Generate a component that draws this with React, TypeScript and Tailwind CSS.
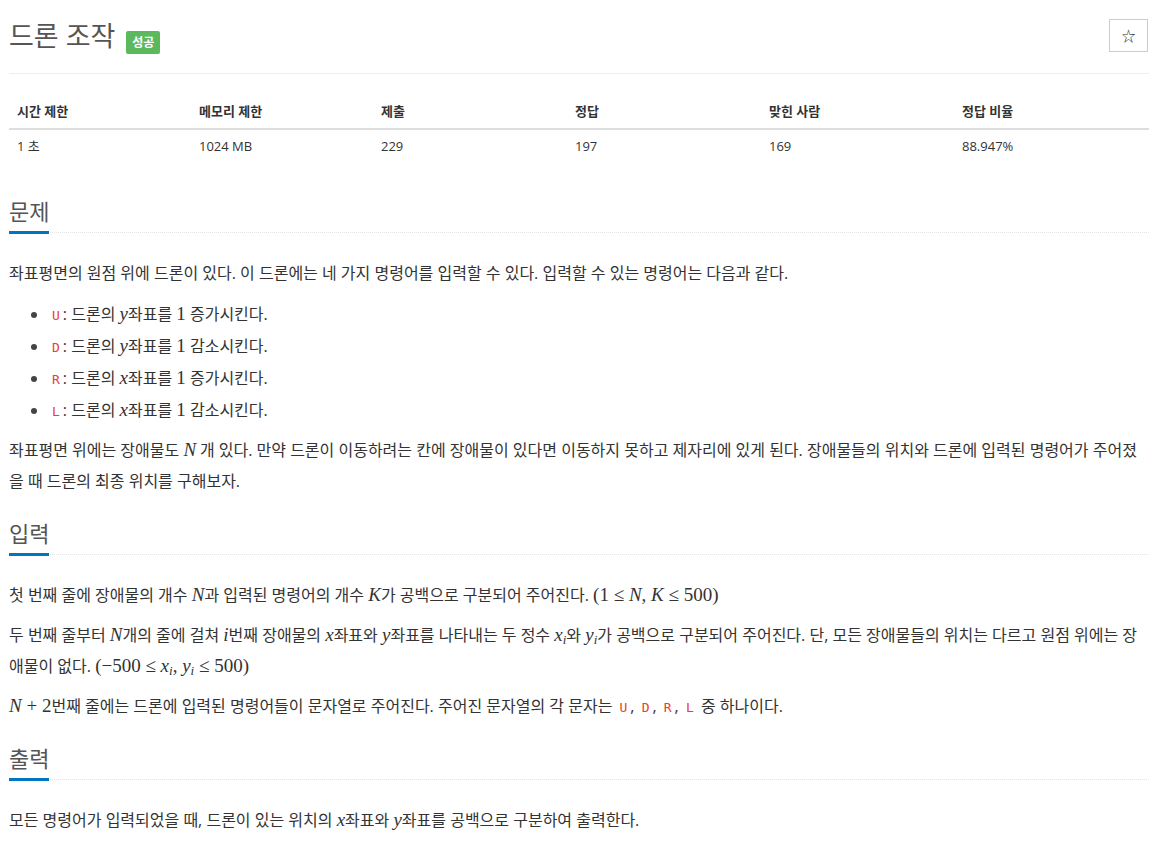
import React from 'react';

const V: React.FC<{ children: React.ReactNode }> = ({ children }) => (
  <span className="font-['Liberation_Serif',serif] text-[19px] italic leading-none">{children}</span>
);

const R: React.FC<{ children: React.ReactNode }> = ({ children }) => (
  <span className="font-['Liberation_Serif',serif] text-[19px] leading-none">{children}</span>
);

const Sub: React.FC<{ v: string }> = ({ v }) => (
  <span className="font-['Liberation_Serif',serif] text-[19px] italic leading-none">
    {v}
    <sub className="text-[13px]">i</sub>
  </span>
);

const Code: React.FC<{ children: React.ReactNode }> = ({ children }) => (
  <code className="px-[3px] font-['DejaVu_Sans_Mono',monospace] text-[13px] leading-none text-[#e8402f]">{children}</code>
);

const Headline: React.FC<{ title: string }> = ({ title }) => (
  <div className="mt-[12px] border-b border-dotted border-[#e5e5e5]">
    <h2 className="-mb-[2px] inline-block border-b-[3px] border-[#0076c0] pb-[5px] text-[22px] leading-[30px] text-[#555]">
      {title}
    </h2>
  </div>
);

const stats = [
  { label: '시간 제한', value: '1 초', w: 'w-[182px]' },
  { label: '메모리 제한', value: '1024 MB', w: 'w-[182px]' },
  { label: '제출', value: '229', w: 'w-[194px]' },
  { label: '정답', value: '197', w: 'w-[194px]' },
  { label: '맞힌 사람', value: '169', w: 'w-[193px]' },
  { label: '정답 비율', value: '88.947%', w: 'w-[195px]' },
];

const App: React.FC = () => {
  return (
    <div className="flex min-h-screen flex-col bg-white pl-[9px] pr-[24px] font-['Open_Sans','Noto_Sans_CJK_KR',sans-serif] text-[#333]">
      {/* 제목 */}
      <div className="flex items-start justify-between border-b border-[#eee] pt-[18px] pb-[19px]">
        <h1 className="flex items-start text-[27px] font-normal leading-[36px] text-[#555]">
          드론 조작
          <span className="ml-[11px] mt-[13px] flex h-[23px] w-[34px] items-center justify-center rounded-[2px] bg-[#5cb85c] text-[12px] font-bold leading-none text-white">
            성공
          </span>
        </h1>
        <button className="mt-px mr-px flex h-[33px] w-[39px] items-center justify-center border border-[#ccc] bg-white text-[14px] text-[#333]">
          ☆
        </button>
      </div>

      {/* 정보 테이블 */}
      <table className="mt-[21px] mb-[21px] w-full border-collapse text-[13px]">
        <thead>
          <tr className="border-b-2 border-[#ddd]">
            {stats.map((s) => (
              <th key={s.label} className={`${s.w} px-[8px] pt-[7px] pb-[8px] text-left font-bold leading-[18px]`}>
                {s.label}
              </th>
            ))}
          </tr>
        </thead>
        <tbody>
          <tr>
            {stats.map((s) => (
              <td key={s.label} className="px-[8px] pt-[7px] pb-[8px] leading-[18px]">
                {s.value}
              </td>
            ))}
          </tr>
        </tbody>
      </table>

      {/* 문제 */}
      <Headline title="문제" />
      <div className="mt-[25px] break-all text-[16px] leading-[31px]">
        <p className="mb-[9px]">
          좌표평면의 원점 위에 드론이 있다. 이 드론에는 네 가지 명령어를 입력할 수 있다. 입력할 수 있는 명령어는 다음과 같다.
        </p>
        <ul className="mb-[9px] list-disc pl-[40px] marker:text-[#444]">
          <li className="leading-[32px]">
            <Code>U</Code>: 드론의 <V>y</V>좌표를 <R>1</R> 증가시킨다.
          </li>
          <li className="leading-[32px]">
            <Code>D</Code>: 드론의 <V>y</V>좌표를 <R>1</R> 감소시킨다.
          </li>
          <li className="leading-[32px]">
            <Code>R</Code>: 드론의 <V>x</V>좌표를 <R>1</R> 증가시킨다.
          </li>
          <li className="leading-[32px]">
            <Code>L</Code>: 드론의 <V>x</V>좌표를 <R>1</R> 감소시킨다.
          </li>
        </ul>
        <p className="mb-[9px]">
          좌표평면 위에는 장애물도 <V>N&thinsp;</V>개 있다. 만약 드론이 이동하려는 칸에 장애물이 있다면 이동하지 못하고 제자리에 있게 된다. 장애물들의 위치와 드론에 입력된 명령어가 주어졌을 때 드론의 최종 위치를 구해보자.
        </p>
      </div>

      {/* 입력 */}
      <Headline title="입력" />
      <div className="mt-[25px] break-all text-[16px] leading-[31px]">
        <p className="mb-[9px]">
          첫 번째 줄에 장애물의 개수 <V>N</V>과 입력된 명령어의 개수 <V>K</V>가 공백으로 구분되어 주어진다.{' '}
          <R>(1 ≤ </R>
          <V>N</V>
          <R>, </R>
          <V>K</V>
          <R> ≤ 500)</R>
        </p>
        <p className="mb-[9px]">
          두 번째 줄부터 <V>N</V>개의 줄에 걸쳐 <V>i</V>번째 장애물의 <V>x</V>좌표와 <V>y</V>좌표를 나타내는 두 정수{' '}
          <Sub v="x" />와 <Sub v="y" />가 공백으로 구분되어 주어진다. 단, 모든 장애물들의 위치는 다르고 원점 위에는 장애물이 없다.{' '}
          <R>(−500 ≤ </R>
          <Sub v="x" />
          <R>, </R>
          <Sub v="y" />
          <R> ≤ 500)</R>
        </p>
        <p className="mb-[9px]">
          <V>N</V>
          <R> + 2</R>번째 줄에는 드론에 입력된 명령어들이 문자열로 주어진다. 주어진 문자열의 각 문자는 <Code>U</Code>,{' '}
          <Code>D</Code>, <Code>R</Code>, <Code>L</Code> 중 하나이다.
        </p>
      </div>

      {/* 출력 */}
      <Headline title="출력" />
      <div className="mt-[25px] break-all text-[16px] leading-[31px]">
        <p className="mb-[9px]">
          모든 명령어가 입력되었을 때, 드론이 있는 위치의 <V>x</V>좌표와 <V>y</V>좌표를 공백으로 구분하여 출력한다.
        </p>
      </div>
    </div>
  );
};

export default App;
